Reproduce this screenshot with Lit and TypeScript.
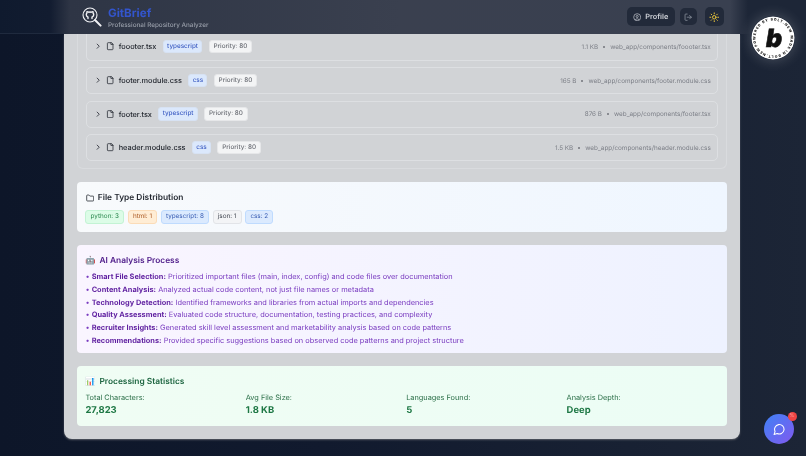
import { LitElement, html, css } from "lit";
import { customElement } from "lit/decorators.js";

const files = [
  { name: "foooter.tsx", type: "typescript", size: "1.1 KB", path: "web_app/components/foooter.tsx" },
  { name: "footer.module.css", type: "css", size: "165 B", path: "web_app/components/footer.module.css" },
  { name: "footer.tsx", type: "typescript", size: "876 B", path: "web_app/components/footer.tsx" },
  { name: "header.module.css", type: "css", size: "1.5 KB", path: "web_app/components/header.module.css" },
];
const dist = [
  { t: "python: 3", c: "green" },
  { t: "html: 1", c: "orange" },
  { t: "typescript: 8", c: "blue" },
  { t: "json: 1", c: "gray" },
  { t: "css: 2", c: "blue" },
];
const steps = [
  ["Smart File Selection:", "Prioritized important files (main, index, config) and code files over documentation"],
  ["Content Analysis:", "Analyzed actual code content, not just file names or metadata"],
  ["Technology Detection:", "Identified frameworks and libraries from actual imports and dependencies"],
  ["Quality Assessment:", "Evaluated code structure, documentation, testing practices, and complexity"],
  ["Recruiter Insights:", "Generated skill level assessment and marketability analysis based on code patterns"],
  ["Recommendations:", "Provided specific suggestions based on observed code patterns and project structure"],
];
const stats = [
  ["Total Characters:", "27,823"],
  ["Avg File Size:", "1.8 KB"],
  ["Languages Found:", "5"],
  ["Analysis Depth:", "Deep"],
];

@customElement("app-root")
export class AppRoot extends LitElement {
  static styles = css`
    :host {
      display: block;
      position: relative;
      width: 806px;
      height: 456px;
      overflow: hidden;
      font-family: Inter, "Liberation Sans", sans-serif;
      text-rendering: geometricPrecision;
      background: linear-gradient(90deg, #0d1629 0%, #111a2e 40%, #1c2536 100%);
      color: #1f2937;
    }
    .wrap { filter: blur(0.45px); height: 456px; display: flex; flex-direction: column; }
    header {
      height: 33.5px;
      box-sizing: border-box;
      flex: none;
      display: flex;
      align-items: center;
      justify-content: space-between;
      padding: 0 82.5px 0 82px;
      background: linear-gradient(90deg, #0f1a2e 0px, #121c30 50px, #2e3545 70px, #3a404f 400px, #394050 730px, #1d2637 748px, #1d2637 806px);
      position: relative;
      z-index: 2;
    }
    header::after {
      content: "";
      position: absolute;
      left: 0;
      bottom: 0;
      width: 60px;
      height: 1px;
      background: #1f2a3e;
    }
    .brand { display: flex; align-items: center; gap: 6px; }
    .brand svg { width: 20px; height: 20px; display: block; margin-top: 1px; }
    .brand-text { display: flex; flex-direction: column; gap: 1px; padding-top: 1.5px; }
    .title { font-size: 11.6px; line-height: 13px; font-weight: 700; color: #3355cc; }
    .sub { font-size: 6.35px; line-height: 8px; color: #989ea9; font-weight: 500; }
    .actions { display: flex; align-items: center; }
    .profile, .icon-btn {
      background: #222a3a;
      border-radius: 5px;
      display: flex;
      align-items: center;
      justify-content: center;
      height: 19px;
    }
    .profile { width: 48px; gap: 4px; color: #ced1d7; font-size: 7.35px; font-weight: 600; }
    .profile svg { width: 8.4px; height: 8.4px; }
    .icon-btn { width: 17px; height: 17px; margin-left: 5px; }
    .icon-btn svg { width: 8.4px; height: 8.4px; }
    .icon-btn.sun { width: 19px; height: 19px; margin-left: 8px; }
    .icon-btn.sun svg { width: 10.5px; height: 10.5px; }

    main { flex: 1; min-height: 0; padding: 0 66px 17px 64px; }
    .panel {
      height: 100%;
      box-sizing: border-box;
      background: #d1d3d6;
      border-radius: 0 0 8px 8px;
      box-shadow: 0 1px 2px #5a5e66;
      padding: 0 13px;
      display: flex;
      flex-direction: column;
      overflow: hidden;
    }
    .list {
      flex: none;
      height: 135px;
      box-sizing: border-box;
      border-left: 1px solid #d9dbde;
      border-right: 1px solid #d9dbde;
      border-bottom: 1px solid #d9dbde;
      border-radius: 0 0 6px 6px;
      padding: 0 8.4px;
      display: flex;
      flex-direction: column;
      gap: 6.5px;
      overflow: hidden;
    }
    .row {
      flex: none;
      height: 27px;
      box-sizing: border-box;
      display: flex;
      align-items: center;
      padding: 0 5.8px 0 6.5px;
      border: 1px solid #dddfe2;
      border-radius: 5px;
    }
    .row:first-child { border-top: none; border-radius: 0 0 5px 5px; }
    .chev { width: 8.4px; height: 8.4px; flex: none; margin-right: 4px; }
    .file { width: 8.4px; height: 8.4px; flex: none; margin-right: 4px; }
    .name { font-size: 7.35px; font-weight: 500; color: #23272f; margin-right: 6.5px; }
    .lang {
      font-size: 6.35px; font-weight: 500; color: #3f5fc4; background: #dbe8fc;
      border: 1px solid #d7e2f3; border-radius: 3px; padding: 0 3.2px; line-height: 11.5px; margin-right: 6.5px;
    }
    .prio {
      font-size: 6.35px; font-weight: 500; color: #6d7077; background: #f3f4f5;
      border: 1px solid #e6e7e9; border-radius: 3px; padding: 0 3.8px; line-height: 11.5px;
    }
    .meta { margin-left: auto; display: flex; align-items: center; gap: 5px; font-size: 6.35px; color: #7c7f87; }
    .dot { width: 2px; height: 2px; border-radius: 50%; background: #70737a; }

    .card { flex: none; margin-top: 13px; border-radius: 4px; padding: 10px 8.4px 8.4px; box-sizing: border-box; }
    .card h3 { margin: 0; font-size: 8.4px; line-height: 13px; font-weight: 600; display: flex; align-items: center; }
    .c-dist { height: 50px; margin-top: 13.5px; background: linear-gradient(90deg, #f8fafc, #eff6ff); }
    .c-dist h3 { color: #1f242d; gap: 3.5px; }
    .c-dist h3 svg { width: 8.4px; height: 8.4px; margin-left: 0.5px; }
    .tags { display: flex; gap: 3.6px; margin-top: 5.4px; }
    .tag { font-size: 6.35px; line-height: 11.5px; padding: 0 4.2px; border-radius: 3px; border: 1px solid; }
    .green { background: #dcfce7; border-color: #c3f3d4; color: #2f8a52; }
    .orange { background: #ffedd5; border-color: #fbdcb8; color: #ac5a24; }
    .blue { background: #dbeafe; border-color: #bfdbfe; color: #3a5eb4; }
    .gray { background: #f3f4f6; border-color: #e2e4e8; color: #434852; }

    .c-ai { height: 108px; background: linear-gradient(90deg, #faf5ff, #eef2ff); }
    .c-ai h3 { color: #52208c; gap: 4px; }
    .emoji { font-size: 8.4px; width: 10px; line-height: 1; font-family: "Noto Sans", sans-serif; }
    .c-ai ul { list-style: none; margin: 3.3px 0 0; padding: 0; }
    .c-ai li { font-size: 7.4px; line-height: 12.7px; color: #7a3cc0; }
    .c-ai b { font-weight: 700; color: #5f1fa0; }
    .c-stats { height: 60px; background: linear-gradient(90deg, #f0fdf4, #ecfdf5); }
    .c-stats h3 { color: #1d6540; gap: 4px; }
    .grid { display: grid; grid-template-columns: repeat(4, 1fr); gap: 8.4px; margin-top: 4px; }
    .k { font-size: 7.35px; line-height: 10px; color: #2a6e47; }
    .v { font-size: 9.45px; line-height: 13px; font-weight: 700; color: #1d7744; margin-top: 1px; }

    .bolt { position: absolute; left: 751px; top: 16px; width: 44px; height: 44px; z-index: 3; border-radius: 50%; box-shadow: 0 0 14px rgba(255,255,255,.22); display: block; filter: blur(0.3px); }
    .chat {
      position: absolute; left: 764px; top: 414px; width: 30px; height: 30px; border-radius: 50%; z-index: 3;
      background: linear-gradient(135deg, #3f82f6, #8159ee);
      display: flex; align-items: center; justify-content: center;
    }
    .chat svg { width: 12.6px; height: 12.6px; }
    .badge { position: absolute; right: -2.5px; top: -2.5px; width: 9px; height: 9px; background: #ef4444; border-radius: 50%; font-size: 5px; line-height: 9px; text-align: center; color: #fca5a5; }
  `;

  render() {
    return html`
      <div class="wrap">
        <header>
          <div class="brand">
            <svg viewBox="0 0 20 20" fill="none" stroke="#f0f1f4">
              <circle cx="8" cy="8" r="7" stroke-width="1.1"/>
              <path d="M13 13 18.6 18.6" stroke-width="2" stroke-linecap="round"/>
              <path d="M6 11.6v-1.4c-1.2-.6-1.7-1.4-1.7-2.5 0-.7.2-1.2.6-1.7-.1-.5 0-1 .2-1.4.6 0 1.2.3 1.7.6a5 5 0 0 1 2.4 0c.5-.3 1.1-.6 1.7-.6.2.4.3.9.2 1.4.4.5.6 1 .6 1.7 0 1.1-.5 1.9-1.7 2.5v1.4" stroke-width="1.4" stroke-linecap="round"/>
            </svg>
            <div class="brand-text">
              <div class="title">GitBrief</div>
              <div class="sub">Professional Repository Analyzer</div>
            </div>
          </div>
          <div class="actions">
            <div class="profile">
              <svg viewBox="0 0 24 24" fill="none" stroke="#c3c7ce" stroke-width="2"><circle cx="12" cy="12" r="10"/><circle cx="12" cy="10" r="3"/><path d="M7 20.7v-1a4 4 0 0 1 4-3h2a4 4 0 0 1 4 3v1"/></svg>
              Profile
            </div>
            <div class="icon-btn">
              <svg viewBox="0 0 24 24" fill="none" stroke="#9aa0ab" stroke-width="2" stroke-linecap="round" stroke-linejoin="round"><path d="M9 21H5a2 2 0 0 1-2-2V5a2 2 0 0 1 2-2h4"/><path d="m16 17 5-5-5-5"/><path d="M21 12H9"/></svg>
            </div>
            <div class="icon-btn sun">
              <svg viewBox="0 0 24 24" fill="none" stroke="#ecc83a" stroke-width="2.2" stroke-linecap="round"><circle cx="12" cy="12" r="4"/><path d="M12 2v2M12 20v2M4.9 4.9l1.4 1.4M17.7 17.7l1.4 1.4M2 12h2M20 12h2M6.3 17.7l-1.4 1.4M19.1 4.9l-1.4 1.4"/></svg>
            </div>
          </div>
        </header>
        <main>
          <div class="panel">
            <div class="list">
              ${files.map(
                (f) => html`
                  <div class="row">
                    <svg class="chev" viewBox="0 0 24 24" fill="none" stroke="#3f434c" stroke-width="2.8" stroke-linecap="round" stroke-linejoin="round"><path d="m9 18 6-6-6-6"/></svg>
                    <svg class="file" viewBox="0 0 24 24" fill="none" stroke="#33373f" stroke-width="2.4" stroke-linecap="round" stroke-linejoin="round"><path d="M15 2H6a2 2 0 0 0-2 2v16a2 2 0 0 0 2 2h12a2 2 0 0 0 2-2V7Z"/><path d="M14 2v5h6"/></svg>
                    <span class="name">${f.name}</span>
                    <span class="lang">${f.type}</span>
                    <span class="prio">Priority: 80</span>
                    <span class="meta"><span>${f.size}</span><span class="dot"></span><span>${f.path}</span></span>
                  </div>
                `
              )}
            </div>
            <section class="card c-dist">
              <h3><svg viewBox="0 0 24 24" fill="none" stroke="#1f242d" stroke-width="2.2" stroke-linejoin="round"><path d="M20 20a2 2 0 0 0 2-2V8a2 2 0 0 0-2-2h-7.9a2 2 0 0 1-1.7-.9l-.8-1.2A2 2 0 0 0 7.9 3H4a2 2 0 0 0-2 2v13a2 2 0 0 0 2 2Z"/></svg>File Type Distribution</h3>
              <div class="tags">${dist.map((d) => html`<span class="tag ${d.c}">${d.t}</span>`)}</div>
            </section>
            <section class="card c-ai">
              <h3><span class="emoji">🤖</span>AI Analysis Process</h3>
              <ul>${steps.map((s) => html`<li>• <b>${s[0]}</b> ${s[1]}</li>`)}</ul>
            </section>
            <section class="card c-stats">
              <h3><span class="emoji">📊</span>Processing Statistics</h3>
              <div class="grid">${stats.map((s) => html`<div><div class="k">${s[0]}</div><div class="v">${s[1]}</div></div>`)}</div>
            </section>
          </div>
        </main>
      </div>
      <svg class="bolt" viewBox="0 0 44 44">
        <circle cx="22" cy="22" r="21.5" fill="#fff"/>
        <defs><path id="ring" d="M22 4.5a17.5 17.5 0 1 1 -0.01 0"/></defs>
        <g transform="rotate(-118 22 22)">
          <text font-size="3.5" font-weight="800" font-family="Inter, sans-serif" fill="#111"><textPath href="#ring" textLength="108" lengthAdjust="spacing">POWERED BY BOLT.NEW MADE IN BOLT.NEW</textPath></text>
        </g>
        <text x="23" y="31" text-anchor="middle" font-size="25" font-weight="900" font-style="italic" font-family="Inter, sans-serif" fill="#111" stroke="#111" stroke-width=".6">b</text>
      </svg>
      <div class="chat">
        <svg viewBox="0 0 24 24" fill="none" stroke="#fff" stroke-width="2" stroke-linecap="round" stroke-linejoin="round"><path d="M7.9 20A9 9 0 1 0 4 16.1L2 22Z"/></svg>
        <span class="badge">%</span>
      </div>
    `;
  }
}
